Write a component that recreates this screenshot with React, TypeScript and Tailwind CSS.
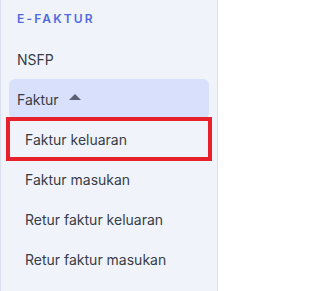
import React from 'react';

const SUB_ITEMS = ['Faktur keluaran', 'Faktur masukan', 'Retur faktur keluaran', 'Retur faktur masukan'];

export default function App() {
  return (
    <div className="w-[218px] h-[291px] overflow-hidden bg-[#f0f3f9] border-x border-[#dbe1ec] font-['Inter',sans-serif] text-[#383d47]">
      {/* section title */}
      <div className="pt-[11px] pb-3 pl-4 text-[12px] leading-4 font-semibold tracking-[0.18em] text-[#5069e0]">
        E-FAKTUR
      </div>

      <nav className="flex flex-col">
        <div className="mx-2 px-2 h-10 flex items-center text-[14px]">NSFP</div>

        <div className="mx-2 px-2 h-10 flex items-center gap-[10px] text-[14px] rounded-md bg-[#d9e0fc]">
          <span>Faktur</span>
          <svg width="12" height="6" viewBox="0 0 12 6" className="mt-[-4px]">
            <path d="M0 6 L6 0 L12 6 Z" fill="#5b6170" />
          </svg>
        </div>

        {SUB_ITEMS.map((label, i) => (
          <div key={label} className="relative mx-2 pl-4 h-10 flex items-center text-[14px]">
            {label}
            {i === 0 && (
              <div className="absolute -left-[3px] -right-[3px] -top-[2px] -bottom-[2px] border-4 border-[#e8202b]" />
            )}
          </div>
        ))}
      </nav>
    </div>
  );
}
